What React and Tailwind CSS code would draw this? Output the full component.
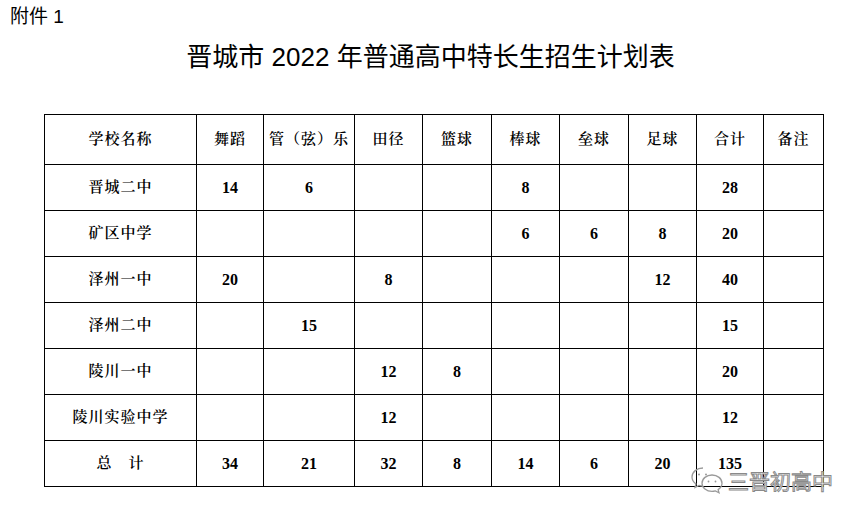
import React from 'react'

const cols = [152, 67, 91, 68, 69, 68, 69, 68, 67, 60]

const headers = ['学校名称', '舞蹈', '管（弦）乐', '田径', '篮球', '棒球', '垒球', '足球', '合计', '备注']

const rows = [
  ['晋城二中', '14', '6', '', '', '8', '', '', '28', ''],
  ['矿区中学', '', '', '', '', '6', '6', '8', '20', ''],
  ['泽州一中', '20', '', '8', '', '', '', '12', '40', ''],
  ['泽州二中', '', '15', '', '', '', '', '', '15', ''],
  ['陵川一中', '', '', '12', '8', '', '', '', '20', ''],
  ['陵川实验中学', '', '', '12', '', '', '', '', '12', ''],
  ['总　计', '34', '21', '32', '8', '14', '6', '20', '135', ''],
]

const serif = "font-['Liberation_Serif','Noto_Serif_CJK_SC','Noto_Sans_CJK_SC',serif]"

function WeChatIcon() {
  return (
    <svg width="34" height="30" viewBox="0 0 34 30" fill="none" stroke="#9a9a9a" strokeWidth="1.3">
      <path d="M13 3C6.9 3 2 7 2 12c0 2.8 1.5 5.2 3.9 6.9L5 22.5l4-2.1c1.2.4 2.5.6 4 .6" />
      <path d="M22 10c-5.5 0-10 3.6-10 8.2s4.5 8.2 10 8.2c1.2 0 2.300-.2 3.4-.5l3.6 1.9-.9-3.2c2.3-1.5 3.9-3.8 3.9-6.4C32 13.6 27.5 10 22 10z" />
      <circle cx="9" cy="9.5" r="1" fill="#9a9a9a" stroke="none" />
      <circle cx="16" cy="9.5" r="1" fill="#9a9a9a" stroke="none" />
      <circle cx="18.5" cy="16.5" r="0.9" fill="#9a9a9a" stroke="none" />
      <circle cx="25.5" cy="16.5" r="0.9" fill="#9a9a9a" stroke="none" />
    </svg>
  )
}

export default function App() {
  return (
    <div className="relative w-[861px] h-[519px] bg-white text-black overflow-hidden">
      {/* 附件 */}
      <div className="h-[32px] pl-[10px] pt-[3px] text-[19px] leading-[28px] font-['Liberation_Sans','Noto_Sans_CJK_SC',sans-serif]">
        附件 1
      </div>

      {/* title */}
      <h1 className="h-[50px] text-center text-[26px] leading-[50px] font-['Liberation_Sans','Noto_Sans_CJK_SC',sans-serif]">
        晋城市 2022 年普通高中特长生招生计划表
      </h1>

      <div className="pt-[32px] pl-[44px]">
        <table className={`border-collapse table-fixed w-[780px] ${serif}`}>
          <colgroup>
            {cols.map((w, i) => (
              <col key={i} style={{ width: w }} />
            ))}
          </colgroup>
          <thead>
            <tr>
              {headers.map((h, i) => (
                <th key={i} className="h-[50px] border border-black text-center text-[15px] font-semibold tracking-[1px] p-0">
                  {h}
                </th>
              ))}
            </tr>
          </thead>
          <tbody>
            {rows.map((r, ri) => (
              <tr key={ri}>
                {r.map((c, ci) => (
                  <td
                    key={ci}
                    className={`h-[46px] border border-black text-center p-0 ${ci === 0 ? 'text-[15px] font-semibold tracking-[1px]' : 'text-[16px] font-bold'}`}
                  >
                    {c}
                  </td>
                ))}
              </tr>
            ))}
          </tbody>
        </table>
      </div>

      {/* watermark */}
      <div className="absolute left-[690px] top-[465px] flex items-center gap-[4px]">
        <WeChatIcon />
        <span className="text-[21px] leading-[28px] text-white [-webkit-text-stroke:1px_#8a8a8a] font-['Noto_Sans_CJK_SC',sans-serif]">
          三晋初高中
        </span>
      </div>
    </div>
  )
}
